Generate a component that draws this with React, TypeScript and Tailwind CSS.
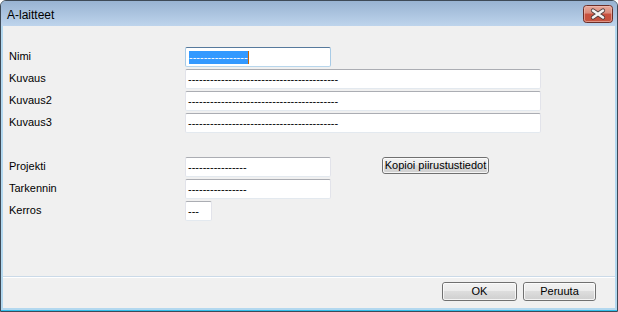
import React from "react";

function TextBox({ w, text, focused }: { w: string; text: string; focused?: boolean }) {
  return (
    <div
      className={
        "h-[20px] bg-white rounded-[2px] border flex items-center pl-[2px] overflow-hidden " +
        w +
        (focused
          ? " border-t-[#56799c] border-x-[#a8cbe6] border-b-[#b8d6ec]"
          : " border-t-[#abadb3] border-x-[#e2e3ea] border-b-[#e3e9ef]")
      }
    >
      {focused ? (
        <div className="flex items-center h-[13px]">
          <span className="ml-[1px] h-[13px] bg-[#3399ff] text-white text-[11px] leading-[13px]">{text}</span>
          <span className="w-[1px] h-[13px] bg-[#cc6600]" />
        </div>
      ) : (
        <span className="text-[11px] leading-[13px] text-black whitespace-nowrap">{text}</span>
      )}
    </div>
  );
}

function Row({ label, children, className }: { label: string; children: React.ReactNode; className?: string }) {
  return (
    <div className={"flex items-center h-[20px] " + (className ?? "")}>
      <div className="w-[182px] pl-[6px] text-[11px] text-black leading-none -mt-[1px]">{label}</div>
      {children}
    </div>
  );
}

function Button({ w, label, h }: { w: string; label: string; h: string }) {
  return (
    <div
      className={
        "relative rounded-[3px] border border-[#707070] bg-[linear-gradient(#f2f2f2_0%,#ebebeb_50%,#dddddd_50%,#cfcfcf_100%)] flex items-center justify-center text-[11px] text-black leading-none " +
        w +
        " " +
        h
      }
    >
      <div className="absolute inset-0 rounded-[2px] border border-[#fcfcfc]/80" />
      <span className="relative">{label}</span>
    </div>
  );
}

export default function App() {
  const d = (n: number) => "-".repeat(n);
  return (
    <div className="w-[618px] h-[312px] font-['Liberation_Sans',Arial,sans-serif] bg-white">
      <div className="w-[618px] h-[312px] rounded-t-[6px] border border-[#3e4a57] bg-[#b3d8ef] flex flex-col overflow-hidden">
        {/* Title bar */}
        <div className="h-[25px] shrink-0 bg-[linear-gradient(#98b3d2,#bed4ec)] flex items-start pl-[6px] pr-[4px]">
          <span className="text-[12px] text-black leading-none mt-[8px]">A-laitteet</span>
          <div className="flex-1" />
          <svg width="30" height="18" viewBox="0 0 30 18" className="mt-[4px]">
            <defs>
              <linearGradient id="cb" x1="0" y1="0" x2="0" y2="1">
                <stop offset="0" stopColor="#e9ab9d" />
                <stop offset="0.45" stopColor="#d98a7b" />
                <stop offset="0.5" stopColor="#c9503f" />
                <stop offset="1" stopColor="#c5543f" />
              </linearGradient>
            </defs>
            <rect x="0.5" y="0.5" width="29" height="17" rx="3" fill="url(#cb)" stroke="#6a2e28" />
            <rect x="1.5" y="1.5" width="27" height="15" rx="2" fill="none" stroke="#f0c2b8" strokeOpacity="0.6" />
            <path d="M10 5.5 L20 12.5 M20 5.5 L10 12.5" stroke="#4d3c3c" strokeWidth="4.2" strokeLinecap="round" />
            <path d="M10 5.5 L20 12.5 M20 5.5 L10 12.5" stroke="#f4f4f4" strokeWidth="2.6" strokeLinecap="round" />
          </svg>
        </div>
        {/* Body frame */}
        <div className="flex-1 flex flex-col px-[2px] pb-[2px] bg-[#b3d8ef] border-b-[1px] border-b-[#33bfea]">
          <div className="flex-1 bg-[#f0f0f0] flex flex-col">
            <div className="pt-[21px] flex flex-col gap-[2px]">
              <Row label="Nimi">
                <TextBox w="w-[146px]" text={d(16)} focused />
              </Row>
              <Row label="Kuvaus">
                <TextBox w="w-[356px]" text={d(41)} />
              </Row>
              <Row label="Kuvaus2">
                <TextBox w="w-[356px]" text={d(41)} />
              </Row>
              <Row label="Kuvaus3">
                <TextBox w="w-[356px]" text={d(41)} />
              </Row>
            </div>
            <div className="pt-[24px] flex flex-col gap-[2px]">
              <Row label="Projekti">
                <TextBox w="w-[146px]" text={d(16)} />
                <div className="ml-[51px] -mt-[3px]">
                  <Button w="w-[107px]" h="h-[17px]" label="Kopioi piirustustiedot" />
                </div>
              </Row>
              <Row label="Tarkennin">
                <TextBox w="w-[146px]" text={d(16)} />
              </Row>
              <Row label="Kerros">
                <TextBox w="w-[27px]" text={d(3)} />
              </Row>
            </div>
            <div className="flex-1" />
            <div className="h-[32px] border-t border-t-[#cbdae8] shadow-[inset_0_1px_0_#ffffff] flex items-start justify-end pt-[5px] pr-[19px] gap-[6px]">
              <Button w="w-[75px]" h="h-[19px]" label="OK" />
              <Button w="w-[73px]" h="h-[19px]" label="Peruuta" />
            </div>
          </div>
        </div>
      </div>
    </div>
  );
}
